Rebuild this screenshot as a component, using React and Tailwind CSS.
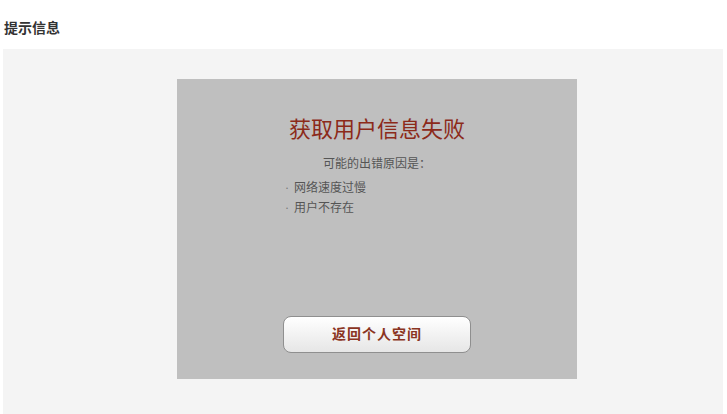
import React from 'react';

const cjk = { fontFamily: '"Liberation Serif", "Noto Sans CJK SC", serif' };

function ReasonList({ items }) {
  return (
    <ul className="mt-[6px] pl-[108px] text-left text-[12px] leading-[20px] text-[#555]">
      {items.map((item) => (
        <li key={item} className="flex">
          <span className="w-[9px] text-[#777]">·</span>
          <span>{item}</span>
        </li>
      ))}
    </ul>
  );
}

export default function App() {
  return (
    <div className="min-h-[414px] bg-white" style={cjk}>
      {/* Page header */}
      <div
        className="h-[49px] pt-[17px] pl-[4px] text-[14px] font-bold leading-[20px] text-[#333]"
        style={{ fontFamily: '"Noto Sans CJK SC", sans-serif' }}
      >
        提示信息
      </div>

      {/* Message panel */}
      <div className="ml-[3px] w-[720px] h-[365px] bg-[#f4f4f4] pt-[30px] pl-[174px]">
        <div className="w-[400px] h-[300px] bg-[#bfbfbf] flex flex-col items-center">
          <h1 className="mt-[38px] text-[22px] leading-[26px] text-[#8c2a1a]">
            获取用户信息失败
          </h1>
          <p className="mt-[13px] text-[12px] leading-[16px] text-[#555]">可能的出错原因是：</p>
          <div className="w-full">
            <ReasonList items={['网络速度过慢', '用户不存在']} />
          </div>

          <button
            className="mt-[98px] w-[188px] h-[37px] rounded-[8px] border border-[#8f8f8f] bg-gradient-to-b from-white to-[#e6e6e6] text-[14px] font-bold tracking-[1px] text-[#8a3422] shadow-[inset_0_1px_0_#fff]"
          >
            返回个人空间
          </button>
        </div>
      </div>
    </div>
  );
}
